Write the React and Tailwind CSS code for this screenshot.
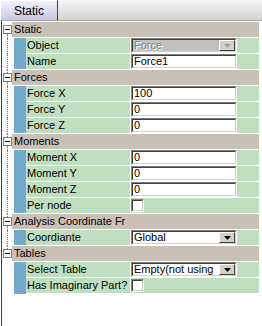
import React from "react";

const GREEN = "bg-[#c0dfc0]";

function Sunken({ className = "", innerClass = "", children }) {
  return (
    <div className={`border border-t-[#808080] border-l-[#808080] border-b-white border-r-white ${className}`}>
      <div className={`h-full w-full border border-t-[#404040] border-l-[#404040] border-b-[#d4d0c8] border-r-[#d4d0c8] ${innerClass}`}>
        {children}
      </div>
    </div>
  );
}

function TextBox({ text }) {
  return (
    <Sunken className="w-[106px] h-[15px]" innerClass="bg-white pl-px text-[11px] leading-[11px] text-black overflow-hidden whitespace-nowrap">
      {text}
    </Sunken>
  );
}

function Arrow({ color }) {
  return (
    <svg width="7" height="4" viewBox="0 0 7 4">
      <path d="M0 0h7L3.5 4z" fill={color} />
    </svg>
  );
}

function DropDown({ text, disabled }) {
  return (
    <Sunken className="w-[106px] h-[15px]" innerClass={`flex ${disabled ? "bg-[#c0c0c0]" : "bg-white"}`}>
      <div
        className={`flex-1 pl-px text-[11px] leading-[11px] overflow-hidden whitespace-nowrap ${
          disabled ? "text-[#808080] [text-shadow:1px_1px_0_#ffffff]" : "text-black"
        }`}
      >
        {text}
      </div>
      <div className="w-[16px] h-full border border-t-white border-l-white border-b-[#404040] border-r-[#404040] bg-[#d4d0c8] flex items-center justify-center">
        <Arrow color={disabled ? "#a0a0a0" : "#000000"} />
      </div>
    </Sunken>
  );
}

function CheckBox() {
  return <Sunken className="w-[13px] h-[13px]" innerClass="bg-white" />;
}

function Dotted({ className = "" }) {
  return <div className={`ml-[5px] w-0 border-l border-dotted border-[#808080] ${className}`} />;
}

function HeaderRow({ title, first, last }) {
  return (
    <div className="flex h-[16px]">
      <div className="w-[10px] h-[16px] flex flex-col">
        {first ? <div className="h-[3px]" /> : <Dotted className="h-[3px]" />}
        <div className="ml-px w-[9px] h-[9px] border border-[#808080] bg-white flex items-center justify-center">
          <div className="w-[5px] h-px bg-black" />
        </div>
        {last ? null : <Dotted className="h-[4px]" />}
      </div>
      <div className="w-[247px] h-[16px] bg-[#c9c0b7] border-b border-white">
        <div className="w-[118px] h-[15px] pl-[2px] text-[11px] leading-[15px] text-black overflow-hidden whitespace-nowrap">
          {title}
        </div>
      </div>
    </div>
  );
}

function DataRow({ label, value, last, noLine }) {
  return (
    <div className="flex h-[16px]">
      <div className="w-[12px] h-[16px]">{noLine ? null : <Dotted className="h-[16px]" />}</div>
      <div className={`w-[12px] bg-[#72aacb] ${last ? "h-[15px]" : "h-[16px]"}`} />
      <div className="flex w-[233px] h-[16px] border-b border-white">
        <div className={`w-[104px] h-[15px] ${GREEN} pl-px text-[11px] leading-[15px] text-black whitespace-nowrap overflow-hidden`}>
          {label}
        </div>
        <div className="w-px h-[15px] bg-white" />
        <div className={`w-[128px] h-[15px] ${GREEN} flex items-center`}>{value}</div>
      </div>
    </div>
  );
}

export default function App() {
  return (
    <div className="w-[262px] h-[326px] bg-white overflow-hidden font-['Liberation_Sans',Arial,sans-serif]">
      <div className="h-[20px] flex bg-gradient-to-b from-[#f6f6f6] to-[#d2d2d2]">
        <div className="w-[58px] h-[20px] border-t border-l border-t-white border-l-white border-r border-r-[#404040] bg-gradient-to-b from-[#f2f2fb] to-[#c6c6e6] flex items-center justify-center text-[12px] text-black">
          Static
        </div>
      </div>
      <div className="h-px bg-[#a8a8a8]" />
      <div className="h-[305px] ml-px border-l border-[#404040] pt-px">
        <HeaderRow title="Static" first />
        <DataRow label="Object" value={<DropDown text="Force" disabled />} />
        <DataRow label="Name" value={<TextBox text="Force1" />} last />
        <HeaderRow title="Forces" />
        <DataRow label="Force X" value={<TextBox text="100" />} />
        <DataRow label="Force Y" value={<TextBox text="0" />} />
        <DataRow label="Force Z" value={<TextBox text="0" />} last />
        <HeaderRow title="Moments" />
        <DataRow label="Moment X" value={<TextBox text="0" />} />
        <DataRow label="Moment Y" value={<TextBox text="0" />} />
        <DataRow label="Moment Z" value={<TextBox text="0" />} />
        <DataRow label="Per node" value={<CheckBox />} last />
        <HeaderRow title="Analysis Coordinate Fr" />
        <DataRow label="Coordiante" value={<DropDown text="Global" />} last />
        <HeaderRow title="Tables" last />
        <DataRow label="Select Table" value={<DropDown text="Empty(not using" />} noLine />
        <DataRow label="Has Imaginary Part?" value={<CheckBox />} noLine />
      </div>
    </div>
  );
}
